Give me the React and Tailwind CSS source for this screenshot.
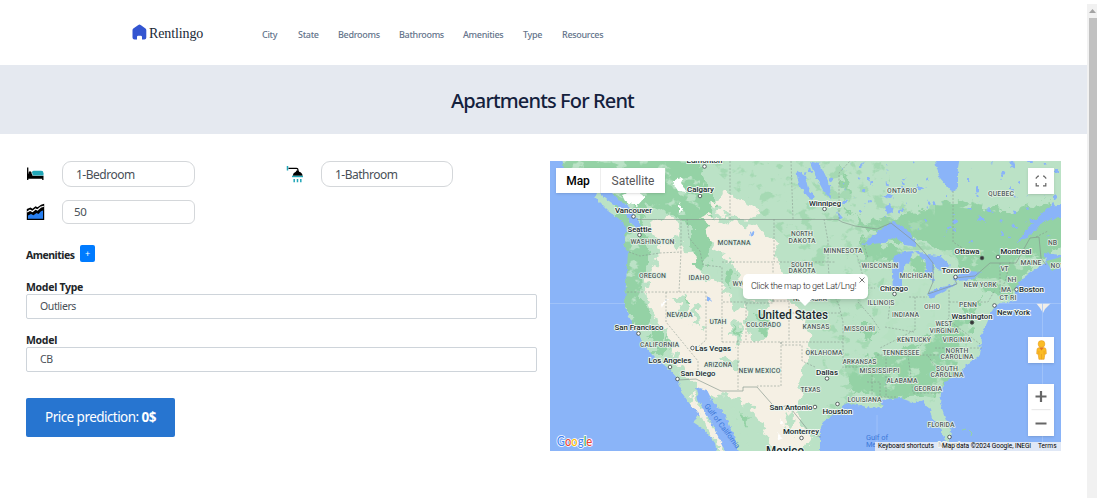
import React from "react";

const navItems = [
  ["City", "w-[36px]"],
  ["State", "w-[40px]"],
  ["Bedrooms", "w-[61px]"],
  ["Bathrooms", "w-[64px]"],
  ["Amenities", "w-[60px]"],
  ["Type", "w-[39px]"],
  ["Resources", "w-[60px]"],
];

// [text, centre x, baseline y, width]
const stateLabels = [
  ["ONTARIO", 902, 193, 30], ["QUEBEC", 1001, 195.5, 26], ["WASHINGTON", 652.5, 244, 44],
  ["OREGON", 652.5, 277.5, 27], ["IDAHO", 699, 280, 21], ["MONTANA", 734, 245, 33],
  ["NORTH", 802, 236, 22], ["DAKOTA", 802, 242.5, 27], ["SOUTH", 802, 267, 22],
  ["DAKOTA", 802, 273, 27], ["MINNESOTA", 843, 252.5, 39], ["WISCONSIN", 880, 268, 37],
  ["WYOMING", 748, 285.5, 31], ["NEBRASKA", 810, 300.5, 34], ["MICHIGAN", 916, 277.5, 33],
  ["ILLINOIS", 881, 305, 27], ["NEVADA", 679.5, 317, 26], ["UTAH", 718, 323.5, 17],
  ["COLORADO", 763.5, 327, 35], ["KANSAS", 816, 329, 27], ["MISSOURI", 859.5, 331, 31],
  ["INDIANA", 905.5, 316.5, 27], ["OHIO", 932, 309, 16], ["PENN", 968, 306.5, 18],
  ["CALIFORNIA", 659.5, 347, 39], ["ARIZONA", 718, 367, 28], ["NEW MEXICO", 759.5, 372.5, 42],
  ["OKLAHOMA", 824, 355, 37], ["ARKANSAS", 859.5, 364, 34], ["TENNESSEE", 901, 355, 37],
  ["KENTUCKY", 914, 341.5, 34], ["WEST", 944, 326, 17], ["VIRGINIA", 944, 332.5, 29],
  ["VIRGINIA", 957, 341.5, 29], ["NORTH", 957, 353, 23], ["CAROLINA", 957, 359, 33],
  ["SOUTH", 947, 370.5, 22], ["CAROLINA", 947, 376.5, 33], ["MISSISSIPPI", 879.5, 373, 40],
  ["ALABAMA", 902, 383, 31], ["GEORGIA", 928, 391, 28], ["TEXAS", 810.5, 392, 20],
  ["LOUISIANA", 864.5, 401.5, 34], ["FLORIDA", 941, 426.5, 27], ["NEW YORK", 980, 286.5, 33],
  ["VT", 1004.5, 271, 8], ["NH", 1012, 281.5, 9], ["MA", 1006, 292, 10],
  ["CT RI", 1008, 299.5, 17], ["MAINE", 1031, 265, 21], ["NB", 1052.5, 245, 9], ["NOVA", 1060, 268, 19],
];

// [text, centre x, baseline y, width, dot x, dot y]
const cityLabels = [
  ["Edmonton", 704.5, 162.5, 36, 704.5, 166.5], ["Calgary", 700.5, 192, 27, 700, 196],
  ["Vancouver", 633.5, 212.5, 37, 633.5, 216.5], ["Seattle", 639.5, 231.5, 24, 639.5, 235],
  ["Winnipeg", 825, 205.5, 32, 824.5, 209], ["Ottawa", 967, 254, 25, 982, 258],
  ["Montreal", 1016, 253.5, 31, 998, 257], ["Toronto", 955.5, 272.5, 28, 955.5, 277],
  ["Boston", 1031.5, 292, 25, 1016.5, 289.5], ["Chicago", 894, 290.5, 28, 894.5, 294],
  ["New York", 1013.5, 315, 33, 994.5, 305.5], ["Washington", 972, 318.5, 41, 972, 322.5],
  ["San Francisco", 639, 329.5, 49, 638.5, 333.5], ["Las Vegas", 713, 351, 36, 692.5, 348],
  ["Los Angeles", 670, 363, 43, 670, 367], ["San Diego", 698, 375.5, 35, 677.5, 379],
  ["Dallas", 827, 374.5, 22, 827, 378.5], ["San Antonio", 791, 410, 43, 815, 407],
  ["Houston", 837.5, 413.5, 30, 837.5, 404], ["Monterrey", 801, 434, 36, 801.5, 438],
  ["Miami", 949, 446.5, 22, 949.5, 437],
];

function MapArt() {
  return (
    <svg className="block h-full w-full" viewBox="550 161 511 290" fontFamily="Roboto, sans-serif">
      <defs>
        <filter id="rough" filterUnits="userSpaceOnUse" x="540" y="150" width="530" height="310">
          <feTurbulence type="fractalNoise" baseFrequency="0.1" numOctaves="3" seed="4" />
          <feDisplacementMap in="SourceGraphic" scale="18" xChannelSelector="R" yChannelSelector="G" />
        </filter>
        <filter id="coast" filterUnits="userSpaceOnUse" x="540" y="150" width="530" height="310">
          <feTurbulence type="fractalNoise" baseFrequency="0.25" numOctaves="2" seed="8" />
          <feDisplacementMap in="SourceGraphic" scale="4" xChannelSelector="R" yChannelSelector="G" />
        </filter>
        <filter id="speckle" filterUnits="userSpaceOnUse" x="540" y="150" width="530" height="310">
          <feTurbulence type="fractalNoise" baseFrequency="0.07 0.09" numOctaves="4" seed="12" />
          <feColorMatrix values="0 0 0 0 0  0 0 0 0 0  0 0 0 0 0  10 0 0 0 -5.7" />
          <feComposite in="SourceGraphic" operator="in" />
        </filter>
        <filter id="lakes" filterUnits="userSpaceOnUse" x="540" y="150" width="530" height="310">
          <feTurbulence type="fractalNoise" baseFrequency="0.12" numOctaves="3" seed="31" />
          <feColorMatrix values="0 0 0 0 0  0 0 0 0 0  0 0 0 0 0  22 0 0 0 -15.2" />
          <feComposite in="SourceGraphic" operator="in" />
        </filter>
      </defs>

      <rect x="550" y="161" width="511" height="290" fill="#bbe2c6" />

      <g filter="url(#rough)" fill="#94d2a5">
        <path d="M540 150H690L706 180 716 205 712 225 700 238 690 225 676 215 650 205 640 222 650 240 644 270 640 300 632 312 615 300V190L540 170z" />
        <path d="M700 205L712 225 708 260 702 272 694 262 690 240z" />
        <path d="M838 160L850 190 845 212 870 222 900 215 960 200 1010 212 1050 200 1070 215V240L1035 262 1010 300 985 292 960 265 940 250 915 240 885 240 870 232 848 210z" />
        <path d="M860 238L905 250 900 262 880 260 862 266z" />
        <path d="M625 300L645 300 652 320 667 347 662 356 645 330 633 325z" />
        <path d="M858 325L870 325 878 334 870 340 858 336z" />
        <path d="M845 365L900 350 950 325 985 296 975 312 965 345 955 375 935 395 900 398 880 400 865 395 850 390z" />
        <path d="M910 255L935 262 930 275 910 270z" />
      </g>

      <g filter="url(#speckle)">
        <path fill="#a5d9b3" d="M705 161H935V451H830L820 330 800 250z" />
        <path fill="#bbe2c6" d="M560 161H700V215H640V330L625 300V200zM890 161H1061V200L1000 212 890 200z" />
        <path fill="#bbe2c6" opacity=".8" d="M890 250H1040L940 390 860 400z" />
      </g>

      <g filter="url(#rough)" fill="#f5f0e4">
        <path d="M650 225L672 215 680 232 676 245 692 255 700 275 715 283 728 290 735 312 750 300 765 308 775 290 790 300 800 315 812 345 802 370 800 390 798 415 815 440 795 452 775 450 760 425 745 400 722 395 712 400 700 392 682 372 676 358 665 330 650 305 645 280 655 265 660 250z" />
        <path d="M700 215L725 222 755 225 775 240 778 262 790 285 770 297 738 284 735 265 715 250z" />
        <path d="M728 193L740 200 760 208 752 218 722 216 715 202z" />
        <path d="M693 390L706 418 719 432 728 450 718 450 704 425 690 400z" />
      </g>
      <g filter="url(#rough)" fill="#bbe2c6">
        <path d="M746 300L764 307 770 320 762 344 752 340 745 320zM732 320l11 4-2 22-7-4zM720 262l16 5 2 10-10 16-10-8zM672 232l9 5-8 14-5-9zM676 296l9 2 3 18-6 3zM692 303l7 6 1 20-7-6zM720 357l22 6-2 6-20-5zM727 397l16 8 18 24 12 20-14 5-20-25zM785 408l9 9-2 16-9-10zM662 332l9 8 2 12-7-2z" />
      </g>
      <g filter="url(#rough)" fill="#94d2a5">
        <path d="M757 313l10 4-3 20-5-3zM726 268l8 3-4 16-6-5zM666 336l6 7-2 8zM738 410l10 10-3 6zM685 300l4 7-5-1zM736 328l5 4-4 9z" />
      </g>
      <g fill="#fff" filter="url(#coast)">
        <path d="M622 195l13-5 10 7-8 9-12-5zM672 181l12-4-3 7 6 8-9-1zM679 202l4 9-4 2zM661 304l5-5 2 0-6 8zM781 418l3 7-4-2zM778 433l5 5-4 2zM752 388l3 7z" />
      </g>
      <path d="M890 161H1061V235L970 243 900 225 850 215 800 195V161z" fill="#8ab4f8" filter="url(#lakes)" />

      <g fill="#8ab4f8" filter="url(#coast)">
        <path d="M540 150H561L564 170 586 177 597 193 595 198 608 211 623 222 626 230 624 245 628 252 626 282 625 303 628 315 638 333 645 347 655 358 668 368 678 379 682 393 692 407 700 415 693 422 705 430 715 443 718 460H540z" />
        <path d="M597 190L613 193 620 201 629 207 634 215 641 226 636 229 629 220 621 209 606 199z" />
        <path d="M696 387L707 390 712 400 725 415 733 433 742 460H729L720 440 708 417 698 400z" />
        <path d="M820 460V430L823 422 837 412 845 403 863 406 870 408 883 407 880 400 900 398 915 403 923 400 930 410 932 418 940 428 945 440 950 443 951 430 945 417 940 403 941 393 945 382 957 375 970 362 980 355 982 343 980 337 987 323 993 308 1000 303 1015 301 1015 288 1023 278 1037 268 1047 263 1044 253 1070 256V460z" />
        <path d="M933 150L936 166 940 178 952 192 958 188 958 168 961 150z" />
        <path d="M862 245L877 232 893 221 904 227 916 240 916 247 905 245 895 237 882 243z" />
        <path d="M894 256L903 252 914 251 908 263 902 272 902 287 893 291 892 273z" />
        <path d="M914 250L927 255 940 256 951 266 940 271 933 263 934 283 926 273 926 262z" />
        <path d="M927 293L940 288 957 283 944 292 930 298zM953 277L970 271 981 272 972 280 956 281z" />
        <path d="M1016 243L1033 223 1047 208 1070 203V216L1044 221 1028 237z" />
        <path d="M809 161L820 164 830 185 831 199 824 192 815 175zM796 170l9 6 3 12 7 9-5 2-11-13zM837 211l6 7-3 3zM885 206l5-2 3 8-6 2zM707 296l5 5-5-1zM750 233l6-3-5 7z" />
        <path d="M978 346l7-5-5 6zM980 335l4 1-3 7z" />
      </g>
      <path d="M1046 261l8-2 7-2v9l-9 5z" fill="#94d2a5" />
      <path d="M962 430l4-1M969 430l3 3-1 3" stroke="#94d2a5" fill="none" />
      <path d="M1036 303h15l-6 6-2 4-3-5z" fill="#f1eee8" />
      <path d="M550 303.5h75M1000 303.5h61M1042.500 303v148M877 415v28" stroke="#a5c5f9" strokeWidth=".8" />

      <g fill="none" stroke="#84948b" strokeWidth=".65">
        <path d="M637 219.500H838L842 222 855 226 877 229 891 223 915 242 925 253 933 263 933 282 928 294 957 284 954 278 975 276 990 263H1016L1030 238 1039 237 1041 258 1046 265M678 380L696 379 721 391 743 391V387H757L771 403 777 409 788 405 800 420 811 434 821 437" />
        <g strokeDasharray="2 1.500" strokeWidth=".55">
          <path d="M629 252L640 256 660 253 681 252V220M681 252L679 292M627 292H706M666 292V322L698 361V374M706 292V340L698 347M687 219L689 238 700 251 703 265 722 267V342M722 262H773V301M746 303H773V292M723 302H746V340M774 219V262H836M722 342H843M781 342V345H802V361L815 367M781 342V386H757M738 340V390M773 291H805L815 296 833 296M773 301H789V313H840M789 313V340M824 219L828 241 828 262 830 288 839 305 843 322V368M856 252L864 280M858 302L872 318 880 330M839 288H875M843 331H872M845 367H872V395M877 355H945M886 355V397M908 355L913 393H940M890 303L888 320M915 297V330L880 348M909 297H927M949 290V318L930 335 918 348M949 302H988L995 290M951 322L980 344M935 348H982M928 356L944 378M885 327L914 332M896 397H880V382H866M730 161V219M791 161L793 219M839 219V173L850 161M953 191V242L975 256M1000 263V300M1010 262L1005 282 1000 290H1016M1036 237L1048 231M864 245L868 258" />
        </g>
      </g>

      <g fill="#53605c" fontSize="6.900" fontWeight="500" textAnchor="middle" stroke="#e4f2e7" strokeWidth="1.600" paintOrder="stroke" strokeLinejoin="round">
        {stateLabels.map(([name, x, y, w], i) => (
          <text key={i} x={x} y={y} textLength={w}>{name}</text>
        ))}
      </g>
      <g fontSize="7.600" fontWeight="500" textAnchor="middle" stroke="#eff7f1" strokeWidth="1.800" paintOrder="stroke" strokeLinejoin="round" fill="#202a2e">
        {cityLabels.map(([name, x, y, w, dx, dy]) => (
          <g key={name}>
            <circle cx={dx} cy={dy} r="1.800" fill={name === "Ottawa" || name === "Washington" ? "#333" : "#fff"} stroke="#4b5553" strokeWidth=".9" paintOrder="normal" />
            <text x={x} y={y} textLength={w} lengthAdjust="spacingAndGlyphs">{name}</text>
          </g>
        ))}
        <text x="793" y="318.500" fontSize="12" textLength="70" lengthAdjust="spacingAndGlyphs">United States</text>
        <text x="785" y="455" fontSize="12" textLength="38" lengthAdjust="spacingAndGlyphs">Mexico</text>
      </g>
      <g fill="#3c78d8" fontSize="7.500">
        <text x="866" y="440" textLength="22">Gulf of</text>
        <text x="866" y="447" textLength="23">Mexico</text>
        <text transform="translate(704 406) rotate(53)" textLength="54">Gulf of California</text>
      </g>
    </svg>
  );
}

function HouseIcon() {
  return (
    <svg className="h-[16px] w-[15px] shrink-0" viewBox="0 0 15 16">
      <path d="M7.500 .5Q8 .5 9 1.300L13.500 4.500Q14.300 5.200 14.300 6.300V13.500Q14.300 15.500 12.300 15.500H10V13Q10 11.800 8.800 11.800H6.200Q5 11.800 5 13V15.500H2.500Q.5 15.500 .5 13.500V6.300Q.5 5.200 1.300 4.500L6 1.300Q7 .5 7.500 .5Z" fill="#3355d1" />
    </svg>
  );
}

function BedIcon() {
  return (
    <svg className="h-[18px] w-[18px]" viewBox="0 0 18 18">
      <path d="M1.700 2.500v12.500" stroke="#000" strokeWidth="1.300" />
      <path d="M1 8.500h5l.5 2.200h11v4.300h-1.300v-1.300H1z" fill="#000" />
      <circle cx="4" cy="7.700" r="1.500" fill="#000" />
      <path d="M6 7.400q0-1.600 1.600-1.600h7.600q2.300 0 2.300 2.400v2.300H7z" fill="#22a7b8" />
    </svg>
  );
}

function ShowerIcon() {
  return (
    <svg className="h-[18px] w-[18px]" viewBox="0 0 18 18">
      <path d="M1.500 1v4.500" stroke="#22a7b8" strokeWidth="1.500" />
      <path d="M2.500 3.300h8q1.400 0 1.400 1.200V7" fill="none" stroke="#000" strokeWidth="1.200" />
      <path d="M6.700 10.800Q7 7.600 9.800 6.800L10.500 5.500h2l.7 1.300q3 .8 3.400 4z" fill="#000" />
      <path d="M6 11.500h11" stroke="#22a7b8" strokeWidth="1.400" />
      <path d="M8.200 14v3.200M11.500 14v3.200M14.800 14v3.200" stroke="#22a7b8" strokeWidth="1.500" />
    </svg>
  );
}

function AreaIcon() {
  return (
    <svg className="h-[18px] w-[19px]" viewBox="0 0 19 18">
      <path d="M.8 6L4.500 4.500l2 1.300L9.500 3.300l2 1L15 1.800 18.200 .8V17H.8z" fill="#000" />
      <path d="M1.200 9L4 7.200l2.500 1.300L9.500 6l2 1 3-2.700 3.300-1" stroke="#fff" strokeWidth="1.200" fill="none" />
      <path d="M2 12.500L5 11l2.500 1.300 3-2.300 2 1L15 8.200l2-.7V15.800H2z" fill="#287ff0" />
    </svg>
  );
}

function Pegman() {
  return (
    <svg className="h-[20px] w-[13px]" viewBox="0 0 13 20">
      <path d="M3.700 7.800h5.600q1.500 0 1.700 1.700l.3 4.300-1.500.5-.7 5H3.900l-.7-5-1.500-.5L2 9.500q.2-1.700 1.700-1.700z" fill="#fbbc25" stroke="#e59920" strokeWidth=".6" />
      <circle cx="6.500" cy="4" r="3.400" fill="#fbbc25" stroke="#e59920" strokeWidth=".5" />
      <path d="M4.200 7.500h4.600l-2.300 3z" fill="#e37426" />
      <path d="M6.500 14v5.300M3.900 11v3.500M9.100 11v3.500" stroke="#e59920" strokeWidth=".6" />
    </svg>
  );
}

function MapPanel() {
  return (
    <section className="relative h-[290px] w-[511px] shrink-0 overflow-hidden font-[Roboto,sans-serif]">
      <MapArt />
      <div className="absolute left-[6px] top-[7px] flex h-[25px] w-[109px] items-center bg-white text-[12px] leading-none shadow">
        <div className="flex h-full w-[45px] items-center justify-center border-r border-[#eee] font-medium text-black">Map</div>
        <div className="flex flex-1 items-center justify-center text-[#565656]">Satellite</div>
      </div>
      <div className="absolute left-[478px] top-[7px] flex size-[26px] items-center justify-center bg-white shadow">
        <svg className="size-[12px]" viewBox="0 0 12 12" fill="none" stroke="#666" strokeWidth="1.200">
          <path d="M1.200 3.800V3L3 1.200h1M8 1.200h1L10.800 3v.8M10.800 8v2.800H8M4 10.800H1.200V8" />
        </svg>
      </div>
      <div className="absolute left-[193px] top-[113px] flex h-[25px] w-[125px] items-center rounded-[5px] bg-white pl-[8px] text-[9px] font-light text-[#222] shadow-md">
        <span className="whitespace-nowrap tracking-[-0.28px]">Click the map to get Lat/Lng!</span>
        <svg className="absolute right-[3px] top-[3px] size-[6px]" viewBox="0 0 6 6" stroke="#666" strokeWidth=".9">
          <path d="M.5 .5l5 5M5.500 .5l-5 5" />
        </svg>
        <svg className="absolute left-[54px] top-[24px] h-[8px] w-[16px]" viewBox="0 0 16 8">
          <path d="M0 0h16L8 8z" fill="#fff" />
        </svg>
      </div>
      <div className="absolute left-[478px] top-[176px] flex size-[26px] items-center justify-center bg-white shadow">
        <Pegman />
      </div>
      <div className="absolute left-[478px] top-[223px] flex h-[52px] w-[26px] flex-col items-center bg-white shadow">
        <svg className="h-[52px] w-[26px]" viewBox="0 0 26 52" stroke="#666" strokeWidth="2.200">
          <path d="M7.500 12.500h11M13 7v11M7.500 39.500h11" />
          <path d="M3.500 25.700h19" stroke="#e6e6e6" strokeWidth="1" />
        </svg>
      </div>
      <svg className="absolute left-[6px] top-[273px] h-[16px] w-[39px]" viewBox="0 0 39 16" fontFamily="Lato, sans-serif">
        <text x=".8" y="12" fontSize="12.500" fontWeight="500" textLength="35.500" lengthAdjust="spacingAndGlyphs" stroke="#fff" strokeWidth="1.600" paintOrder="stroke">
          <tspan fill="#4285f4">G</tspan><tspan fill="#ea4335">o</tspan><tspan fill="#fbbc05">o</tspan><tspan fill="#4285f4">g</tspan><tspan fill="#34a853">l</tspan><tspan fill="#ea4335">e</tspan>
        </text>
      </svg>
      <div className="absolute bottom-0 right-0 flex h-[9px] w-[186px] items-center bg-[#f5f5f5]/80 text-[6.6px] leading-none text-black">
        <span className="w-[64px] shrink-0 whitespace-nowrap pl-[3px] tracking-[-0.08px]">Keyboard shortcuts</span>
        <span className="w-[95px] shrink-0 whitespace-nowrap pl-[3px] tracking-[-0.08px]">Map data ©2024 Google, INEGI</span>
        <span className="pl-[4px]">Terms</span>
      </div>
    </section>
  );
}

export default function App() {
  return (
    <div className="flex h-[498px] w-[1097px] overflow-hidden bg-white font-['Noto_Sans',sans-serif]">
      <div className="w-[1087px] shrink-0">
        <header className="flex h-[65px] items-center pl-[132px] pt-[3px]">
          <div className="flex w-[130px] items-center gap-[2px]">
            <span className="pb-[4px]"><HouseIcon /></span>
            <span className="font-['Liberation_Serif',serif] text-[14px] leading-none tracking-[-0.12px] text-[#202936]">Rentlingo</span>
          </div>
          <nav className="flex pt-[1px] text-[9px] font-medium leading-none tracking-[-0.3px] text-[#64748b]">
            {navItems.map(([item, width]) => <a key={item} className={width + " whitespace-nowrap"}>{item}</a>)}
          </nav>
        </header>
        <div className="flex h-[69px] items-center justify-center bg-[#e5e9f0] pt-[2px] pr-[2px]">
          <h1 className="text-[20px] font-medium leading-none tracking-[-0.87px] text-[#14213d]">Apartments For Rent</h1>
        </div>
        <main className="flex gap-[13px] pl-[26px] pt-[27px]">
          <form className="w-[511px] text-[#212529]">
            <div className="flex h-[26px] items-center">
              <span className="w-[36px]"><BedIcon /></span>
              <div className="flex h-[26px] w-[133px] items-center rounded-[9px] border border-[#d4d7da] pl-[13px] pt-[1px] text-[12px] tracking-[-0.5px] text-[#495057]">1-Bedroom</div>
              <span className="ml-[91px] w-[35px]"><ShowerIcon /></span>
              <div className="flex h-[26px] w-[132px] items-center rounded-[9px] border border-[#d4d7da] pl-[13px] pt-[1px] text-[12px] tracking-[-0.5px] text-[#495057]">1-Bathroom</div>
            </div>
            <div className="mt-[13px] flex h-[24px] items-center">
              <span className="w-[36px]"><AreaIcon /></span>
              <div className="flex h-[24px] w-[133px] items-center rounded-[6px] border border-[#d4d7da] pl-[11px] text-[11.5px] tracking-[-0.3px] text-[#495057]">50</div>
            </div>
            <div className="mt-[21px] flex h-[17px] items-center">
              <span className="w-[54px] pt-[3px] text-[10.5px] font-bold leading-none tracking-[-0.5px]">Amenities</span>
              <span className="flex h-[17px] w-[15px] items-center justify-center rounded-[2px] bg-[#007bff] text-[9px] leading-none text-white">+</span>
            </div>
            <label className="mt-[18px] block h-[14px] text-[10.5px] font-bold leading-[14px] tracking-[-0.3px]">Model Type</label>
            <div className="flex h-[25px] items-center rounded-[2px] border border-[#ced4da] pl-[13px] pt-[1px] text-[10.5px] tracking-[-0.4px] text-[#495057]">Outliers</div>
            <label className="mt-[14px] block h-[14px] text-[10.5px] font-bold leading-[14px] tracking-[-0.3px]">Model</label>
            <div className="flex h-[25px] items-center rounded-[2px] border border-[#ced4da] pl-[13px] pt-[1px] text-[10.5px] tracking-[-0.5px] text-[#495057]">CB</div>
            <button type="button" className="mt-[26px] flex h-[39px] w-[149px] items-center justify-center gap-[3px] rounded-[2px] bg-[#2775d0] text-[13.5px] leading-none tracking-[-0.55px] text-white">
              <span>Price prediction:</span><b>0$</b>
            </button>
          </form>
          <MapPanel />
        </main>
      </div>
      <aside className="mt-[4px] flex w-[10px] flex-col items-end bg-[#f1f1f1]">
        <div className="flex h-[14px] w-[8px] items-center">
          <svg className="h-[4px] w-[7px]" viewBox="0 0 7 4"><path d="M0 4h7L3.500 0z" fill="#a3a3a3" /></svg>
        </div>
        <div className="h-[222px] w-[8px] bg-[#c1c1c1]" />
      </aside>
    </div>
  );
}
